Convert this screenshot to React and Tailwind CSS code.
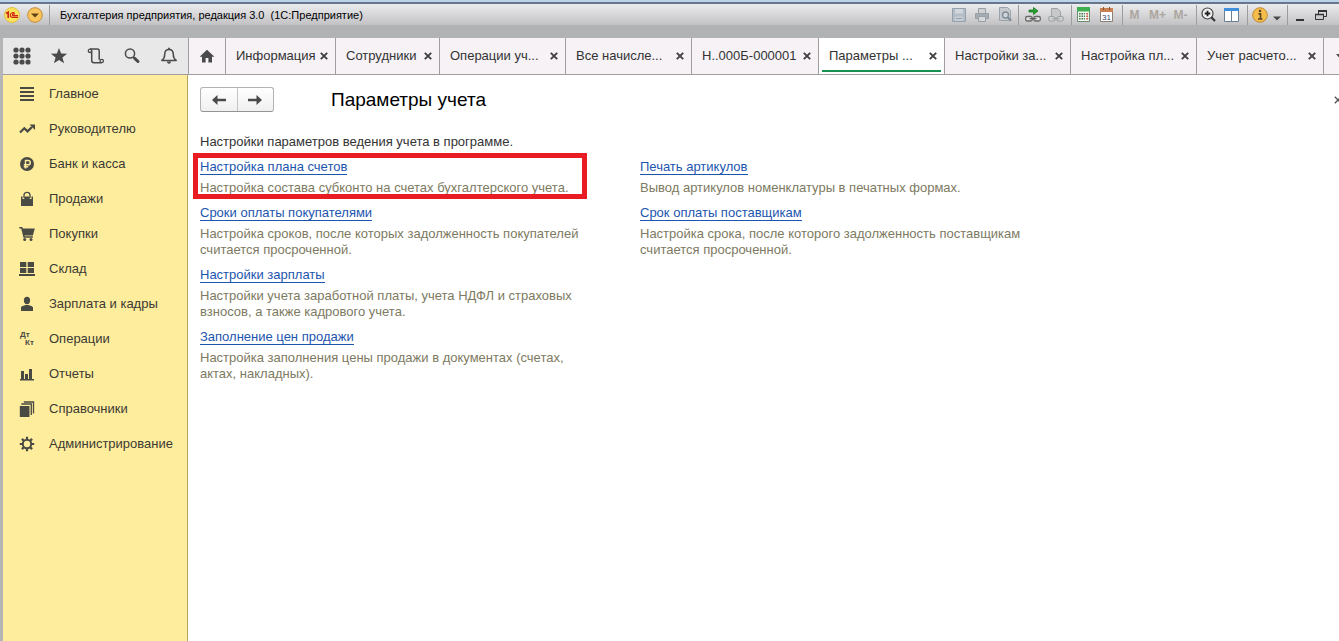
const INK = '#4a4a44';

function Svg({ w = 16, h = 16, box, children, className = '' }) {
  return (
    <svg width={w} height={h} viewBox={box || `0 0 ${w} ${h}`} className={`block shrink-0 ${className}`} fill="none" aria-hidden="true">
      {children}
    </svg>
  );
}

const IconGrid = () => (
  <Svg w={18} h={18}>
    {[3, 9, 15].map((y) => [3, 9, 15].map((x) => <circle key={`${x}-${y}`} cx={x} cy={y} r="2.6" fill="#4a4a4a" />))}
  </Svg>
);
const IconStar = () => (
  <Svg w={18} h={18}>
    <path d="M9 1l2.1 5.6 6 .2-4.7 3.7 1.7 5.8L9 12.9l-5.1 3.4 1.7-5.8L.9 6.800l6-.2z" fill="#4a4a4a" />
  </Svg>
);
const IconScroll = () => (
  <Svg w={18} h={18}>
    <circle cx="3" cy="3.800" r="1.700" stroke="#4a4a4a" strokeWidth="1.300" />
    <path d="M3 2h7.300c1.200 0 1.900.7 1.900 1.900v8.800" stroke="#4a4a4a" strokeWidth="1.500" />
    <path d="M4.700 3.800v9.400c0 1.500.8 2.500 2.300 2.500h7.800" stroke="#4a4a4a" strokeWidth="1.500" />
    <circle cx="14.700" cy="14" r="1.700" stroke="#4a4a4a" strokeWidth="1.300" />
  </Svg>
);
const IconSearch = () => (
  <Svg w={18} h={18}>
    <circle cx="7" cy="6.500" r="4.600" stroke="#4a4a4a" strokeWidth="1.500" />
    <path d="M10.300 10l1.500 1.500" stroke="#4a4a4a" strokeWidth="1.500" />
    <path d="M11.700 11.300l3.300 3.200" stroke="#4a4a4a" strokeWidth="3" strokeLinecap="round" />
  </Svg>
);
const IconBell = () => (
  <Svg w={18} h={18}>
    <path d="M9 2.400c-3 0-4.300 2.300-4.300 5 0 3.300-1 4.600-2.900 6h14.400c-1.900-1.400-2.900-2.700-2.900-6 0-2.700-1.300-5-4.300-5z" stroke="#4a4a4a" strokeWidth="1.500" strokeLinejoin="round" />
    <path d="M9 .8v1.600" stroke="#4a4a4a" strokeWidth="1.800" />
    <path d="M7 14.500h4c0 1.300-.8 2.200-2 2.200s-2-.9-2-2.200z" fill="#4a4a4a" />
  </Svg>
);
const IconHome = () => (
  <Svg w={16} h={14}>
    <path d="M8 .8L.6 7.800H3v5.700h3.600V9h2.800v4.500H13V7.800h2.400z" fill="#4a4a4a" />
  </Svg>
);

const SIDEBAR = [
  ['Главное', <path key="i" d="M1 2h14M1 6h14M1 10h14M1 14h14" stroke={INK} strokeWidth="2" />],
  ['Руководителю', <g key="i"><path d="M1 11.500l4.300-4.300 3.200 3.200L13 6" stroke={INK} strokeWidth="2.200" /><path d="M10.500 3.500H16V9z" fill={INK} /></g>],
  ['Банк и касса', <g key="i"><circle cx="8" cy="8" r="7" fill={INK} /><path d="M6.500 12.500V4.500h2.600a2.100 2.100 0 0 1 0 4.300H4.800M4.800 10.800h4.400" stroke="#ffed9e" strokeWidth="1.400" /></g>],
  ['Продажи', <g key="i"><path d="M2 5.500h1.500V8h1.800V5.500h5.400V8h1.800V5.500H14V15H2z" fill={INK} /><path d="M5 7V4c0-3.600 6-3.600 6 0v3" stroke={INK} strokeWidth="1.300" /></g>],
  ['Покупки', <g key="i"><path d="M.3 1.800h2.500l2.300 9.200h8.700" stroke={INK} strokeWidth="1.500" /><path d="M3.200 2.500h12.600l-1.900 7H5z" fill={INK} /><circle cx="5.700" cy="13.500" r="1.500" fill={INK} /><circle cx="12" cy="13.500" r="1.500" fill={INK} /></g>],
  ['Склад', <path key="i" d="M1 1h6.300v5H1zM8.700 1H15v5H8.700zM1 7h6.300v5H1zM8.700 7H15v5H8.700zM0 13h16v2H0z" fill={INK} />],
  ['Зарплата и кадры', <g key="i"><ellipse cx="8" cy="4.500" rx="3.100" ry="3.700" fill={INK} /><path d="M2 15v-3.300C2 10 5 9.700 6.500 9h3c1.500.700 4.500 1 4.500 2.700V15z" fill={INK} /></g>],
  ['Операции', <g key="i" fill={INK} className="font-['Liberation_Sans',sans-serif] text-[8px] font-bold"><text x="1" y="6">Дт</text><text x="6" y="14">Кт</text></g>],
  ['Отчеты', <path key="i" d="M2 5h3v8H2zM6 8h3v5H6zM10 3h3v10h-3zM1 13h14v1.500H1z" fill={INK} />],
  ['Справочники', <g key="i"><path d="M.8 5h9.700v11H.8z" fill={INK} /><path d="M2.300 3h10v11M4.800 1h9.700v11.500" stroke={INK} strokeWidth="1.300" /></g>],
  ['Администрирование', <g key="i"><circle cx="8" cy="8" r="4.200" stroke={INK} strokeWidth="2" /><path d="M8 .8v2.700M8 12.500v2.700M.8 8h2.700M12.500 8h2.700M2.900 2.900l1.900 1.900M11.200 11.200l1.900 1.900M2.900 13.100l1.900-1.900M11.200 4.800l1.900-1.900" stroke={INK} strokeWidth="2.200" /></g>],
];

const TABS = [
  ['Информация', 'w-[110px]'],
  ['Сотрудники', 'w-[104px]'],
  ['Операции уч...', 'w-[126px]'],
  ['Все начисле...', 'w-[126px]'],
  ['Н..000Б-000001', 'w-[127px]'],
  ['Параметры ...', 'w-[126px]'],
  ['Настройки за...', 'w-[126px]'],
  ['Настройка пл...', 'w-[126px]'],
  ['Учет расчето...', 'w-[127px]'],
];

const Cross = () => (
  <Svg w={8} h={8}>
    <path d="M.8.8l6.400 6.400M7.200.8L.8 7.200" stroke="#404040" strokeWidth="1.900" />
  </Svg>
);

function TitleBar() {
  const btn = 'flex h-5 w-[23px] items-center justify-center';
  const group = 'flex h-5 items-center border-l border-[#9c9c9e]';
  return (
    <header className="border-t-2 border-[#bcd3ea] bg-[#b1b2b4] pb-[13px]">
      <div className="flex h-[23px] w-full items-center border-t-2 border-[#66778c] bg-linear-to-b from-[#ececee] to-[#c2c2c4]">
        <button aria-label="1С" className="ml-1 flex">
          <Svg w={16} h={16}>
            <circle cx="8" cy="8" r="7.500" fill="#fbe45a" stroke="#e2bd4a" />
            <path d="M2 6.500L4.200 5.200v5.800" stroke="#cf2417" strokeWidth="1.700" />
            <path d="M10.800 6.600C9.900 5.300 6.300 5 6.300 8c0 1.500 1.100 2.400 2.600 2.400H14M10.600 7.500c-.9-.8-2.300-.6-2.300.5 0 .4.300.6.800.6H14" stroke="#cf2417" strokeWidth="1.100" />
          </Svg>
        </button>
        <button aria-label="Меню" className="ml-[7px] flex">
          <Svg w={16} h={16}>
            <circle cx="8" cy="8" r="7.300" fill="#f9c55c" stroke="#c58b3a" />
            <path d="M4 6.500h8L8 10.500z" fill="#5d4317" />
          </Svg>
        </button>
        <span className="ml-1.5 h-5 border-l border-[#9c9c9e]" />
        <h1 className="ml-2.5 text-[11px] whitespace-pre text-black">Бухгалтерия предприятия, редакция 3.0  (1С:Предприятие)</h1>
        <div className="ml-auto flex items-center">
          <div className="flex pr-0.5">
            <button aria-label="Сохранить" className={btn}>
              <Svg w={14} h={14}><path d="M.5.500h13v13H.5z" fill="#b4bcc5" stroke="#93a0ad" /><path d="M3 1h8v4.500H3z" fill="#d2d7dc" /><path d="M3 8.500h8V13H3z" fill="#c9ced4" /><path d="M4 10.500h6" stroke="#93a0ad" /></Svg>
            </button>
            <button aria-label="Печать" className={btn}>
              <Svg w={14} h={14}><path d="M3.500 5V.5h7V5" fill="#d0d2d4" stroke="#98a0a8" /><path d="M.5 5.500h13v5H.5z" fill="#a3abb3" stroke="#98a0a8" /><path d="M3.500 8.500h7v5h-7z" fill="#d5d7d9" stroke="#98a0a8" /></Svg>
            </button>
            <button aria-label="Просмотр" className={btn}>
              <Svg w={14} h={15}><path d="M1.500.5h8l3 3v10h-11z" fill="#c6cacf" stroke="#9aa3ac" /><circle cx="7.500" cy="8" r="3" fill="#d0d5d9" stroke="#7f8c98" strokeWidth="1.400" /><path d="M9.700 10.200l3.500 3.500" stroke="#7f8c98" strokeWidth="2" /></Svg>
            </button>
          </div>
          <div className={`${group} pl-0.5 pr-1`}>
            <button aria-label="Получить ссылку" className={btn}>
              <Svg w={16} h={16}><path d="M4 3h4.500V.5L13 4 8.500 7.500V5H4z" fill="#27a32d" stroke="#0f6e17" strokeWidth=".7" /><rect x=".7" y="9.500" width="6.500" height="4.500" rx="1.500" stroke="#676767" fill="#e5e5e5" strokeWidth="1.300" /><rect x="8.800" y="9.500" width="6.500" height="4.500" rx="1.500" stroke="#676767" fill="#e5e5e5" strokeWidth="1.300" /><path d="M4.500 11.700h7" stroke="#555" strokeWidth="1.200" /></Svg>
            </button>
            <button aria-label="Перейти по ссылке" className={btn}>
              <Svg w={16} h={16}><path d="M3.500 9V1.500h6l3 3V9" fill="#c6c8ca" stroke="#a0a4a7" /><rect x=".7" y="9.500" width="6.500" height="4.500" rx="1.500" stroke="#999da0" fill="#cfd1d3" /><rect x="8.800" y="9.500" width="6.500" height="4.500" rx="1.500" stroke="#999da0" fill="#cfd1d3" /><path d="M4.500 11.700h7" stroke="#999da0" /></Svg>
            </button>
          </div>
          <div className={`${group} pr-1`}>
            <button aria-label="Калькулятор" className={btn}>
              <Svg w={13} h={15}><path d="M.5.500h12v14H.5z" fill="#f4f8f2" stroke="#6b8a70" /><path d="M0 0h13v4.500H0z" fill="#3fae50" /><path d="M2 6.700h6M2 9.200h6M2 11.700h6" stroke="#4d8058" strokeWidth="1.400" strokeDasharray="1.600 .8" /><path d="M9.300 6.700h1.800M9.300 9.200h1.800M9.300 11.700h1.800" stroke="#c0503c" strokeWidth="1.400" /></Svg>
            </button>
            <button aria-label="Календарь" className={btn}>
              <Svg w={13} h={15}><path d="M.5 1.500h12v13H.5z" fill="#fff" stroke="#8a8078" /><path d="M0 1h13v4H0z" fill="#c98152" /><path d="M3.500 0v3M9.500 0v3" stroke="#8a5530" /><text x="2" y="12.500" fill="#334a70" className="font-['Liberation_Sans',sans-serif] text-[8px]">31</text></Svg>
            </button>
          </div>
          <div className={`${group} pr-1 text-[12px] font-bold text-[#aca69f]`}>
            <button className={btn}>M</button>
            <button className={btn}>M+</button>
            <button className={btn}>M-</button>
          </div>
          <div className={`${group} pr-1`}>
            <button aria-label="Увеличить" className={btn}>
              <Svg w={15} h={15}><circle cx="6.500" cy="6.500" r="5.500" fill="#f1f1f1" stroke="#444" strokeWidth="1.200" /><path d="M3.700 6.500h5.600M6.500 3.700v5.600" stroke="#222" strokeWidth="1.800" /><path d="M10.300 10.300l3.700 3.700" stroke="#333" strokeWidth="2.200" /></Svg>
            </button>
            <button aria-label="Панели" className={btn}>
              <Svg w={15} h={14}><path d="M.5.500h14v13H.5z" fill="#fff" stroke="#6a7f92" /><path d="M0 0h15v3H0z" fill="#3f8fdc" /><path d="M7.500 3v10.500" stroke="#6a7f92" /></Svg>
            </button>
          </div>
          <div className={`${group} pr-1`}>
            <button aria-label="Справка" className={btn}>
              <Svg w={16} h={16}><circle cx="8" cy="8" r="7.300" fill="#f6bd4c" stroke="#bf8a31" /><path d="M6.500 6.800h2v5M6 12h4.500" stroke="#5b4720" strokeWidth="1.700" /><circle cx="8" cy="4" r="1.300" fill="#5b4720" /></Svg>
            </button>
            <button aria-label="Ещё" className="flex h-5 w-3 items-end justify-center pb-1">
              <Svg w={8} h={5}><path d="M0 .5h8L4 4.500z" fill="#4a4a4a" /></Svg>
            </button>
          </div>
          <div className={group}>
            <button aria-label="Свернуть" className="flex h-5 w-[23px] items-end justify-center pb-1">
              <Svg w={8} h={2}><path d="M0 0h8v2H0z" fill="#333" /></Svg>
            </button>
            <button aria-label="Восстановить" className="flex h-5 w-7 items-center pl-1">
              <Svg w={12} h={10}><path d="M3.500 4V1.500h8v5H9" stroke="#333" /><path d="M3 1h9" stroke="#333" strokeWidth="2" /><path d="M.5 4.500h8v5h-8z" fill="#ccc" stroke="#333" /><path d="M0 4.500h9" stroke="#333" strokeWidth="1.500" /></Svg>
            </button>
          </div>
        </div>
      </div>
    </header>
  );
}

function TopBar() {
  return (
    <div className="flex h-[37px] overflow-hidden border-b border-[#a09da0] bg-[#f6f2f6]">
      <div className="flex w-[185px] shrink-0 items-center justify-between bg-[#e8e8e8] px-2.5">
        <button aria-label="Все функции"><IconGrid /></button>
        <button aria-label="Избранное"><IconStar /></button>
        <button aria-label="История"><IconScroll /></button>
        <button aria-label="Поиск"><IconSearch /></button>
        <button aria-label="Уведомления"><IconBell /></button>
      </div>
      <button aria-label="Начальная страница" className="flex w-[37px] shrink-0 items-center justify-center border-l border-[#a09da0]"><IconHome /></button>
      {TABS.map(([name, width]) => {
        const active = name.startsWith('Параметры');
        return (
          <div key={name} className={`flex shrink-0 border-l border-[#a09da0] px-[3px] pb-0.5 ${width} ${active ? 'bg-white' : ''}`}>
            <div className={`flex w-full items-center justify-between border-b-2 pt-1 pr-1 pl-[7px] ${active ? 'border-[#16914f]' : 'border-transparent'}`}>
              <button className="text-[13px] whitespace-nowrap text-[#333]">{name}</button>
              <button aria-label={`Закрыть ${name}`}><Cross /></button>
            </div>
          </div>
        );
      })}
      <button aria-label="Список вкладок" className="flex flex-1 items-center border-l border-[#a09da0] pl-3">
        <Svg w={8} h={5}><path d="M0 0h8L4 4.500z" fill="#4a4a4a" /></Svg>
      </button>
    </div>
  );
}

const COLUMNS = [
  [
    ['Настройка плана счетов', 'Настройка состава субконто на счетах бухгалтерского учета.', true],
    ['Сроки оплаты покупателями', 'Настройка сроков, после которых задолженность покупателей считается просроченной.'],
    ['Настройки зарплаты', 'Настройки учета заработной платы, учета НДФЛ и страховых взносов, а также кадрового учета.'],
    ['Заполнение цен продажи', 'Настройка заполнения цены продажи в документах (счетах, актах, накладных).'],
  ],
  [
    ['Печать артикулов', 'Вывод артикулов номенклатуры в печатных формах.'],
    ['Срок оплаты поставщикам', 'Настройка срока, после которого задолженность поставщикам считается просроченной.'],
  ],
];

export default function App() {
  return (
    <div className="flex min-h-screen flex-col bg-white font-['Liberation_Sans',Arial,sans-serif] text-[13px] leading-4">
      <TitleBar />
      <div className="flex flex-1 flex-col border-l-3 border-[#b5b5b7]">
        <TopBar />
        <div className="flex flex-1">
          <nav className="w-[185px] shrink-0 border-r border-[#b5a55c] bg-[#ffed9e]">
            {SIDEBAR.map(([name, icon]) => (
              <a key={name} href="#" className="flex h-[35px] items-center gap-3.5 pt-0.5 pl-4 text-[#3b3a33]">
                <Svg w={16} h={16}>{icon}</Svg>
                {name}
              </a>
            ))}
          </nav>
          <main className="min-w-0 flex-1 pt-3 pl-3">
            <div className="flex items-center">
              <div className="flex h-[25px] w-[74px] rounded-[3px] border border-[#b3b3b3] border-b-[#949494] bg-linear-to-b from-white to-[#f0f0f0]">
                <button aria-label="Назад" className="flex flex-1 items-center justify-center border-r border-[#c4c4c4]">
                  <Svg w={14} h={10}><path d="M0 5L5.500 0v3.800H14v2.400H5.500V10z" fill="#4a4a4a" /></Svg>
                </button>
                <button aria-label="Вперед" className="flex flex-1 items-center justify-center">
                  <Svg w={14} h={10}><path d="M14 5L8.500 0v3.800H0v2.400h8.500V10z" fill="#4a4a4a" /></Svg>
                </button>
              </div>
              <h2 className="ml-[57px] text-[19px] leading-6 text-black">Параметры учета</h2>
              <button aria-label="Закрыть" className="ml-auto w-[5px] overflow-hidden">
                <Svg w={8} h={8}><path d="M.8.8l6.400 6.400M7.200.8L.8 7.200" stroke="#555" strokeWidth="1.300" /></Svg>
              </button>
            </div>
            <p className="mt-[22px] text-[#333]">Настройки параметров ведения учета в программе.</p>
            <div className="mt-[9px] flex gap-14">
              {COLUMNS.map((items) => (
                <div key={items[0][0]} className="flex w-96 flex-col gap-[9px]">
                  {items.map(([title, text, marked]) => (
                    <section key={title} className="relative">
                      <a href="#" className="inline-block border-b border-[#1c55ae] leading-[15px] text-[#1c55ae]">{title}</a>
                      <p className="mt-[5px] text-[#7d7a5f]">{text}</p>
                      {marked && <div className="pointer-events-none absolute -top-1.5 -right-[3px] -bottom-[3px] -left-[7px] border-5 border-[#e91c24]" />}
                    </section>
                  ))}
                </div>
              ))}
            </div>
          </main>
        </div>
      </div>
    </div>
  );
}
